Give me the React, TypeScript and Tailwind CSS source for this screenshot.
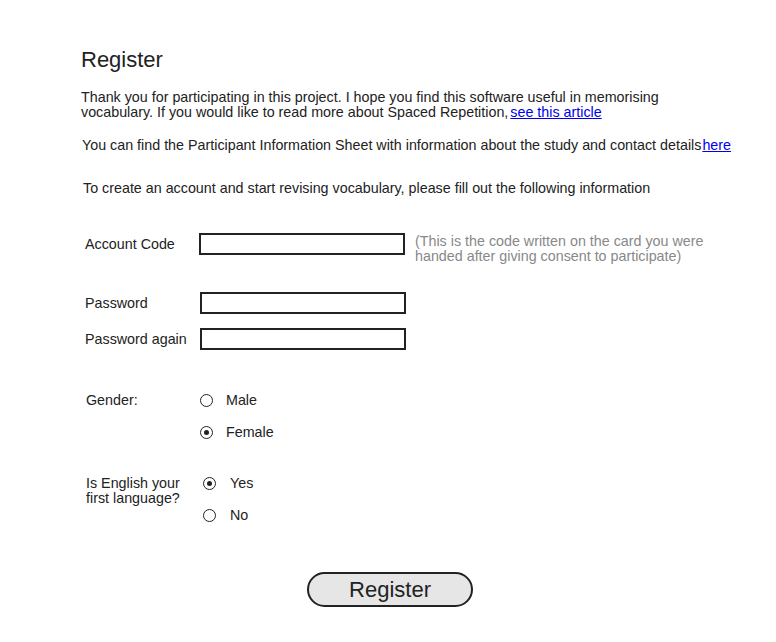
import React from "react";

function Radio({ checked }: { checked?: boolean }) {
  return (
    <span className="w-[13px] h-[13px] rounded-full border-[1.5px] border-[#222] bg-white flex items-center justify-center shrink-0">
      {checked ? <span className="w-[5px] h-[5px] rounded-full bg-[#222]" /> : null}
    </span>
  );
}

function Input() {
  return <div className="h-[22px] w-[206px] border-2 border-[#222] bg-white shrink-0" />;
}

export default function App() {
  return (
    <div className="w-[776px] h-[642px] bg-white text-[#222] font-['Liberation_Sans',Arial,sans-serif] text-[14.3px] leading-[15px] overflow-hidden">
      <div className="pl-[81px] pt-[47px]">
        <h1 className="text-[22px] leading-[26px]">Register</h1>
        <p className="mt-[17px] w-[610px]">
          Thank you for participating in this project. I hope you find this software useful in memorising vocabulary. If
          you would like to read more about Spaced Repetition,
          <a className="text-[#0000ee] underline ml-[2px]" href="#">see this article</a>
        </p>
        <p className="mt-[18px] ml-[1px] whitespace-nowrap">
          You can find the Participant Information Sheet with information about the study and contact details
          <a className="text-[#0000ee] underline ml-[1px]" href="#">here</a>
        </p>
        <p className="mt-[28px] ml-[2px]">
          To create an account and start revising vocabulary, please fill out the following information
        </p>

        <div className="mt-[37px] ml-[4px] flex items-start">
          <div className="w-[114px] h-[22px] flex items-center">Account Code</div>
          <Input />
          <div className="ml-[10px] text-[#888] leading-[15px] pt-[1px] whitespace-nowrap">
            (This is the code written on the card you were
            <br />
            handed after giving consent to participate)
          </div>
        </div>

        <div className="mt-[28px] ml-[4px] flex items-center">
          <div className="w-[115px]">Password</div>
          <Input />
        </div>
        <div className="mt-[14px] ml-[4px] flex items-center">
          <div className="w-[115px]">Password again</div>
          <Input />
        </div>

        <div className="mt-[43px] ml-[5px] flex items-start">
          <div className="w-[114px] h-[15px]">Gender:</div>
          <div className="flex flex-col gap-[17px]">
            <label className="flex items-center h-[15px]">
              <Radio />
              <span className="ml-[13px]">Male</span>
            </label>
            <label className="flex items-center h-[15px]">
              <Radio checked />
              <span className="ml-[13px]">Female</span>
            </label>
          </div>
        </div>

        <div className="mt-[36px] ml-[5px] flex items-start">
          <div className="w-[117px]">
            Is English your
            <br />
            first language?
          </div>
          <div className="flex flex-col gap-[17px]">
            <label className="flex items-center h-[15px]">
              <Radio checked />
              <span className="ml-[14px]">Yes</span>
            </label>
            <label className="flex items-center h-[15px]">
              <Radio />
              <span className="ml-[14px]">No</span>
            </label>
          </div>
        </div>
      </div>

      <div className="mt-[49px] flex">
        <button className="ml-[307px] w-[166px] h-[35px] rounded-full border-2 border-[#222] bg-[#e6e6e6] text-[22px] leading-[26px] text-[#222] flex items-center justify-center">
          Register
        </button>
      </div>
    </div>
  );
}
